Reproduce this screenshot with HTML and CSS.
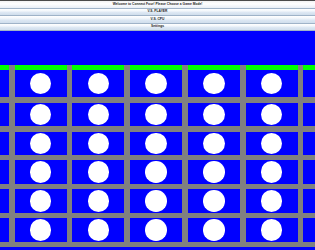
FILE: index.html
```html
<!DOCTYPE html>
<html lang="en">
<head>
    <meta charset="UTF-8">
    <meta name="viewport" content="width=device-width, initial-scale=1.0">
    <title>Connect Four</title>
    <link rel="stylesheet" href="styles.css">
</head>
<body>

<div class="menu">
    <div class="mode title">Welcome to Connect Four! Please Choose a Game Mode!</div>
    <button class="mode">V.S. PLAYER</button>
    <button class="mode">V.S. CPU</button>
    <button class="mode">Settings</button>
</div>

<div class="drop-zone"></div>

<div class="board" id="board"></div>

<script>
    const rows = 6;
    const cols = 7;
    const board = document.getElementById('board');

    for (let r = 0; r < rows; r++) {
        for (let c = 0; c < cols; c++) {
            const cell = document.createElement('div');
            cell.className = r === 0 ? 'cell top' : 'cell';
            cell.innerHTML = '<span class="slot"></span>';
            board.appendChild(cell);
        }
    }
</script>

</body>
</html>
```

FILE: styles.css
```css
body {
    margin: 0;
    width: 315px;
    height: 250px;
    overflow: hidden;
    background-color: #0000ff;
    font-family: "Liberation Sans", Arial, sans-serif;
}
.menu {
    display: flex;
    flex-direction: column;
    border-top: 1px solid #4a4a4a;
}
.mode {
    display: flex;
    align-items: center;
    justify-content: center;
    height: 7.5px;
    margin: 0;
    padding: 0;
    border: none;
    border-bottom: 1px solid #9fb3c8;
    box-sizing: border-box;
    background: linear-gradient(#ffffff 0%, #f4f8fc 30%, #dce7f3 60%, #d0deec 100%);
    font-family: inherit;
    font-size: 3.3px;
    font-weight: bold;
    color: #222;
    line-height: 1;
}
.title {
    background: linear-gradient(#f2f2f2 0%, #ffffff 40%, #e8eef5 100%);
}
.drop-zone {
    height: 34px;
    background-color: #0000ff;
}
.board {
    display: grid;
    grid-template-columns: repeat(7, 52px);
    grid-template-rows: 32.3px repeat(5, 23.5px);
    column-gap: 5.74px;
    row-gap: 5.4px;
    width: max-content;
    margin-left: -43px;
    border-bottom: 5.4px solid #808080;
    background-color: #808080;
}
.cell {
    display: flex;
    align-items: center;
    justify-content: center;
    background-color: #0000ff;
    box-sizing: border-box;
}
.cell.top {
    border-top: 5.7px solid #00ff00;
}
.slot {
    width: 21.5px;
    height: 21.5px;
    border-radius: 50%;
    background-color: #ffffff;
}
```
